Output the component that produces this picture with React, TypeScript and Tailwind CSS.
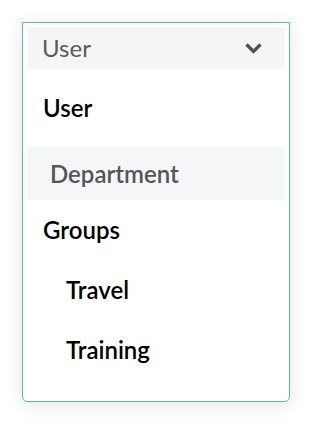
const options = [
  { label: "Groups", indent: false },
  { label: "Travel", indent: true },
  { label: "Training", indent: true },
];

export default function App() {
  return (
    <div className="w-[312px] h-[424px] bg-white pt-[22px] pl-[22px] font-['Lato',sans-serif]">
      <div className="w-[268px] h-[380px] flex flex-col p-1 border border-[#5dbf96] rounded-b-[5px] bg-white shadow-[0_3px_18px_rgba(0,0,0,0.11)]">
        <div className="h-[42px] flex items-center justify-between pl-[15px] pr-[23px] bg-[#f5f5f5]">
          <span className="text-[24px] text-[#5a5a5a]">User</span>
          <svg width="17" height="12" viewBox="0 0 17 12" fill="none">
            <path d="M1.5 2.5l7 7 7-7" stroke="#505050" strokeWidth="3.2" />
          </svg>
        </div>
        <div className="h-[78px] flex items-center pl-4 text-[24px] font-semibold text-black">
          User
        </div>
        <div className="h-[53px] flex items-center pl-[23px] bg-[#f5f6f8] text-[24px] font-semibold text-[#555]">
          Department
        </div>
        {options.map((o) => (
          <div
            key={o.label}
            className={`h-[60px] flex items-center text-[24px] font-semibold text-black ${o.indent ? "pl-[39px]" : "pl-4"}`}>
            {o.label}
          </div>
        ))}
      </div>
    </div>
  );
}
